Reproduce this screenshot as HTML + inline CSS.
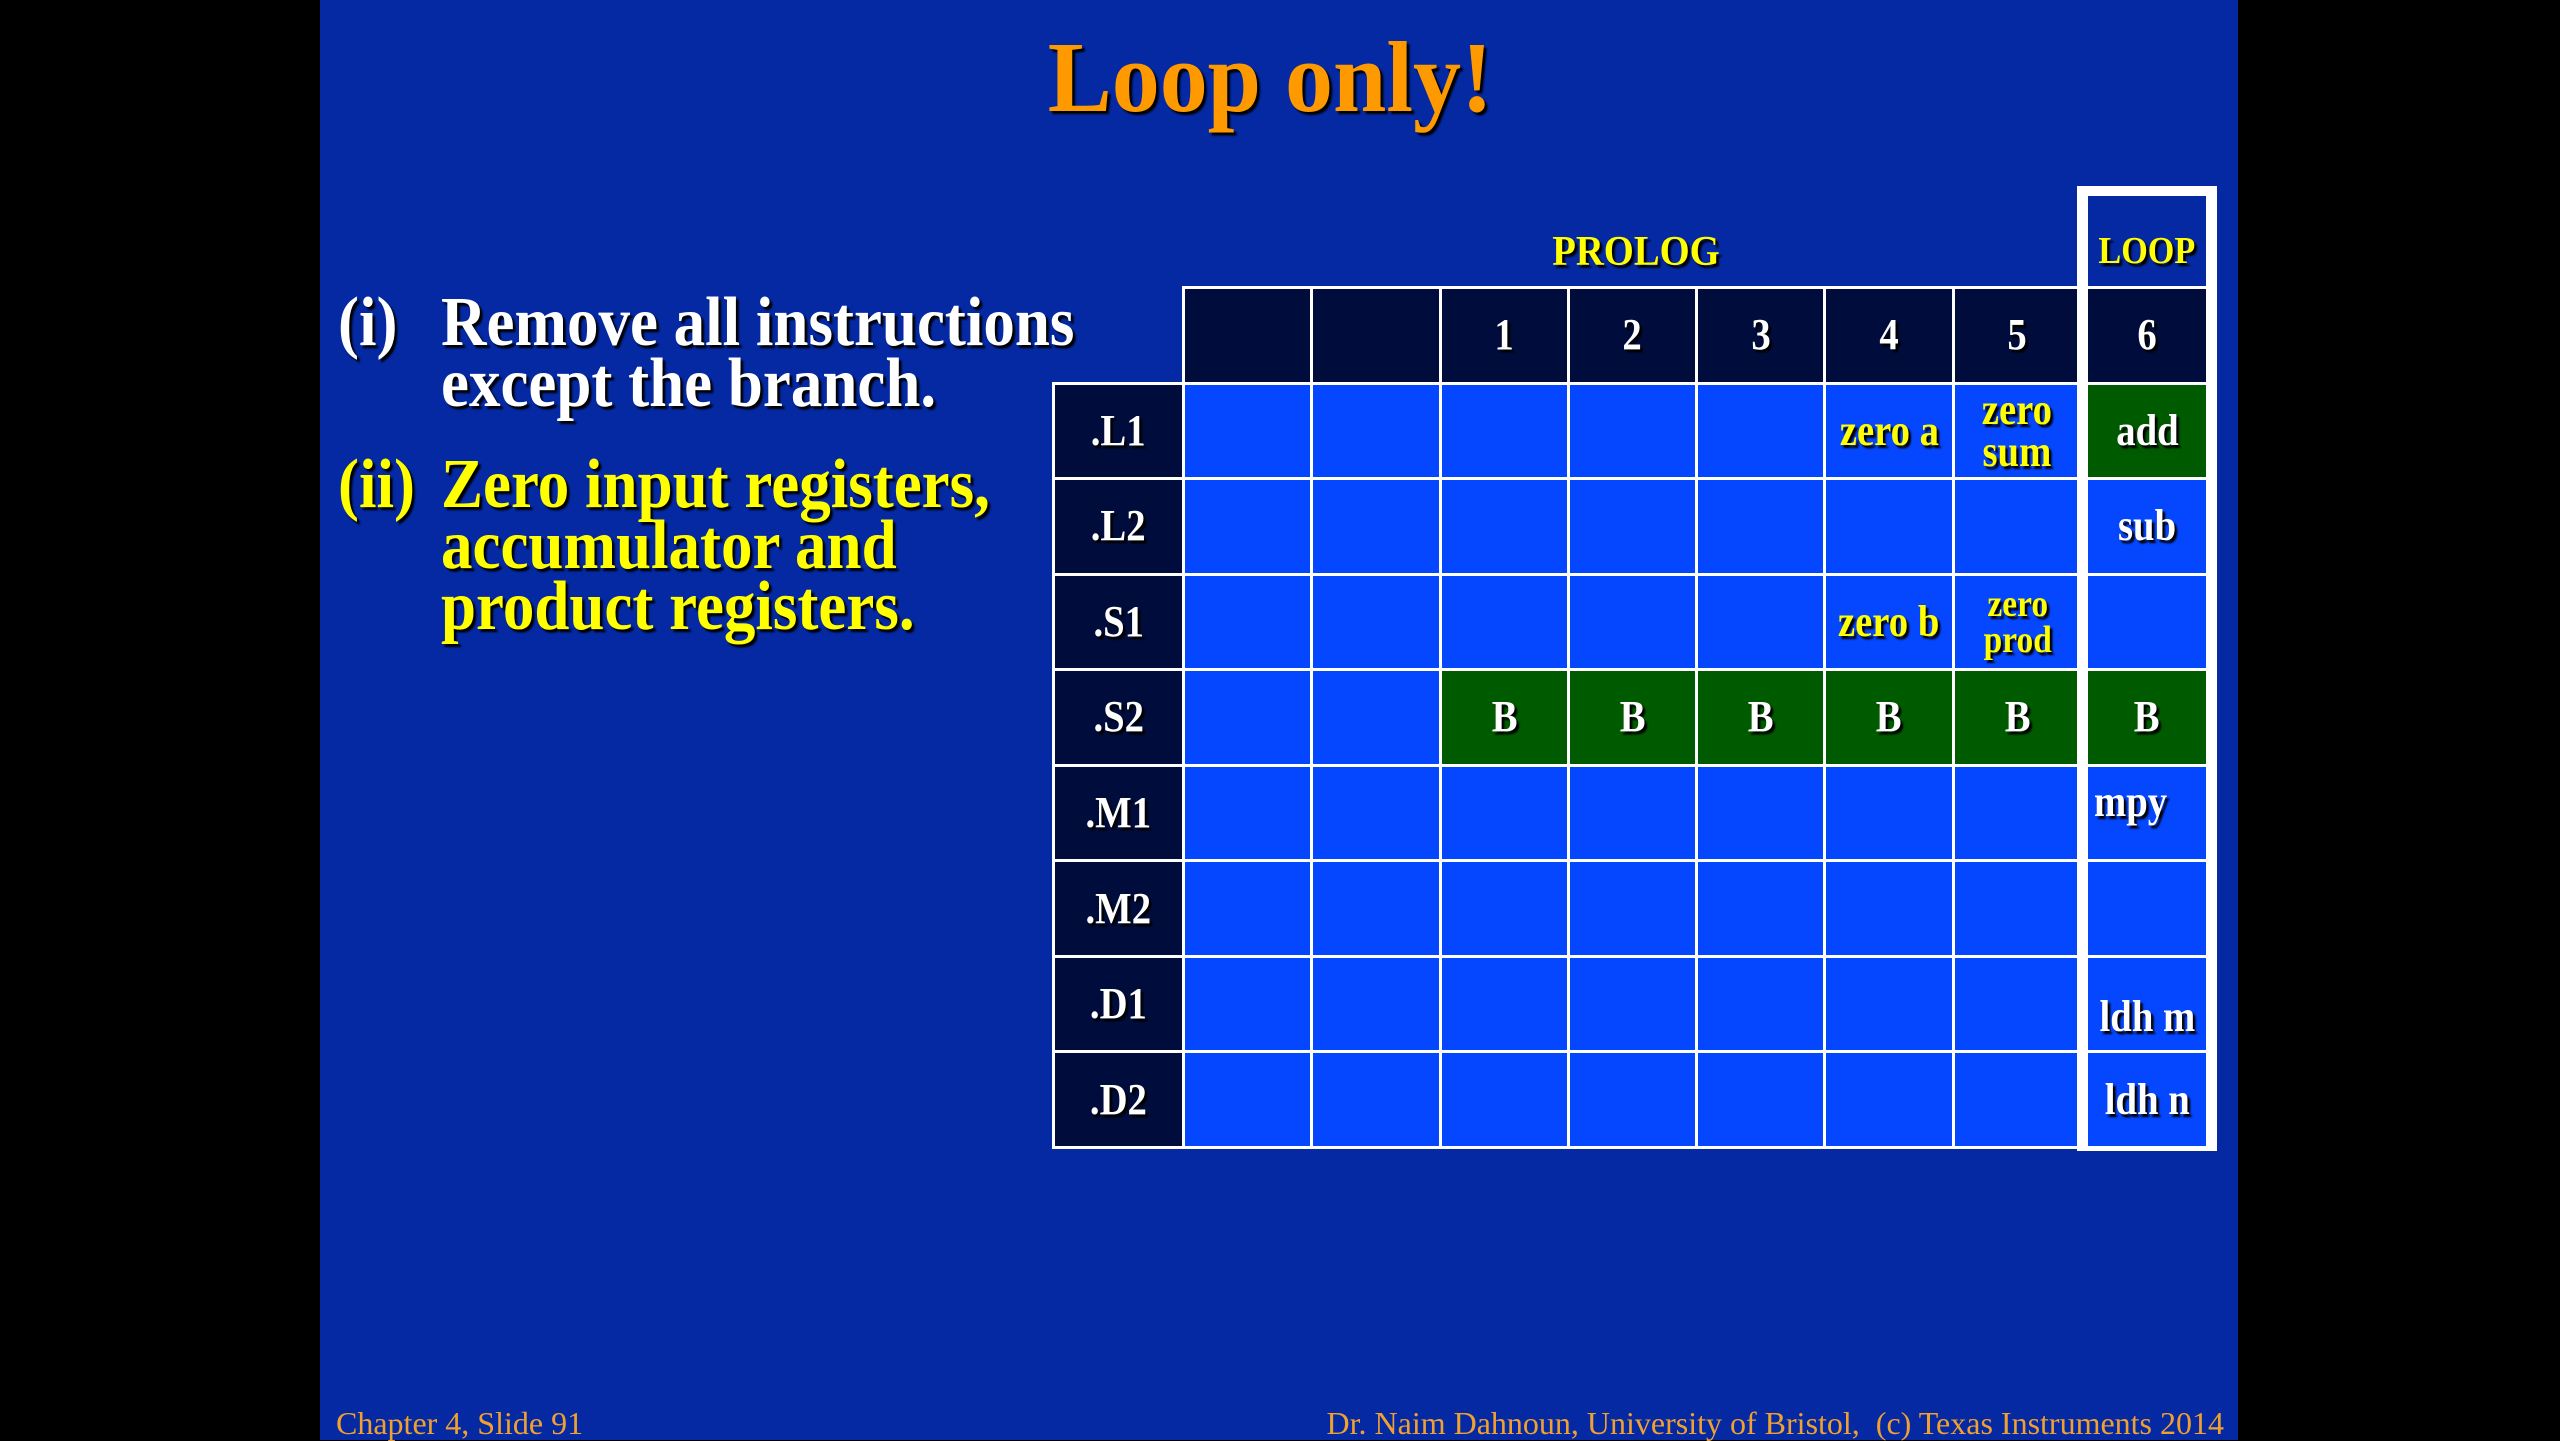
<!DOCTYPE html>
<html><head><meta charset="utf-8"><style>
html,body{margin:0;padding:0;background:#000;}
body{width:2560px;height:1440px;position:relative;overflow:hidden;font-family:"Liberation Serif",serif;font-weight:bold;}
#slide{position:absolute;left:320px;top:0;width:1918px;height:1440px;background:#0429a3;}
.a{position:absolute;white-space:nowrap;z-index:5;}
.sh{text-shadow:3px 3px 2px #000;}
.sx{display:inline-block;transform:scaleX(0.9);transform-origin:left center;}
.grid{position:absolute;display:grid;background:#fff;padding:3px;gap:3px;box-sizing:border-box;z-index:1;}
.grid>div{display:flex;align-items:center;justify-content:center;text-align:center;color:#fff;font-size:44px;line-height:42px;text-shadow:3px 3px 2px #000;}
.grid>div span{display:inline-block;transform:scaleX(0.88);}
.h{background:#000d3c;}
.b{background:#0546ff;}
.g{background:#005a00;}
.y{color:#ffff00 !important;}
</style></head><body>
<div id="slide"></div>

<div class="a sh" style="left:0;width:2560px;text-align:center;top:22px;font-size:101px;line-height:110px;color:#ff9900;"><span style="display:inline-block;transform:scaleX(0.95);margin-left:-20px;">Loop only!</span></div>

<div class="grid" style="left:1052px;top:286px;width:1031px;height:863px;grid-template-columns:127px repeat(7,1fr);grid-template-rows:repeat(9,1fr);">
<div style="background:#0429a3;margin:-3px 0 0 -3px;"></div>
<div class="h"></div><div class="h"></div><div class="h"><span>1</span></div><div class="h"><span>2</span></div><div class="h"><span>3</span></div><div class="h"><span>4</span></div><div class="h"><span>5</span></div>

<div class="h"><span>.L1</span></div><div class="b"></div><div class="b"></div><div class="b"></div><div class="b"></div><div class="b"></div><div class="b y"><span>zero a</span></div><div class="b y"><span>zero<br>sum</span></div>
<div class="h"><span>.L2</span></div><div class="b"></div><div class="b"></div><div class="b"></div><div class="b"></div><div class="b"></div><div class="b"></div><div class="b"></div>
<div class="h"><span>.S1</span></div><div class="b"></div><div class="b"></div><div class="b"></div><div class="b"></div><div class="b"></div><div class="b y"><span>zero b</span></div><div class="b y" style="font-size:38px;line-height:36px;"><span>zero<br>prod</span></div>
<div class="h"><span>.S2</span></div><div class="b"></div><div class="b"></div><div class="g"><span>B</span></div><div class="g"><span>B</span></div><div class="g"><span>B</span></div><div class="g"><span>B</span></div><div class="g"><span>B</span></div>
<div class="h"><span>.M1</span></div><div class="b"></div><div class="b"></div><div class="b"></div><div class="b"></div><div class="b"></div><div class="b"></div><div class="b"></div>
<div class="h"><span>.M2</span></div><div class="b"></div><div class="b"></div><div class="b"></div><div class="b"></div><div class="b"></div><div class="b"></div><div class="b"></div>
<div class="h"><span>.D1</span></div><div class="b"></div><div class="b"></div><div class="b"></div><div class="b"></div><div class="b"></div><div class="b"></div><div class="b"></div>
<div class="h"><span>.D2</span></div><div class="b"></div><div class="b"></div><div class="b"></div><div class="b"></div><div class="b"></div><div class="b"></div><div class="b"></div>
</div>

<div class="a sh" style="left:338px;top:292px;font-size:70px;line-height:61px;color:#fff;"><span class="sx">(i)</span></div>
<div class="a sh" style="left:441px;top:292px;font-size:70px;line-height:61px;color:#fff;"><span class="sx">Remove all instructions</span><br><span class="sx">except the branch.</span></div>
<div class="a sh" style="left:338px;top:454px;font-size:70px;line-height:61px;color:#ffff00;"><span class="sx">(ii)</span></div>
<div class="a sh" style="left:441px;top:454px;font-size:70px;line-height:61px;color:#ffff00;"><span class="sx">Zero input registers,</span><br><span class="sx">accumulator and</span><br><span class="sx">product registers.</span></div>

<div class="a sh" style="left:1436px;width:400px;text-align:center;top:227px;font-size:42px;line-height:50px;color:#ffff00;"><span style="display:inline-block;transform:scaleX(0.92);">PROLOG</span></div>

<div class="a" style="left:2077px;top:186px;width:140px;height:965px;background:#fff;z-index:1;"></div>
<div class="a" style="left:2088px;top:196px;width:118px;height:90px;background:#0429a3;z-index:2;"></div>
<div class="a sh" style="left:2088px;top:226px;width:118px;text-align:center;font-size:38px;line-height:50px;color:#ffff00;"><span style="display:inline-block;transform:scaleX(0.9);">LOOP</span></div>
<div class="grid" style="left:2085px;top:286px;width:124px;height:863px;grid-template-columns:1fr;grid-template-rows:repeat(9,1fr);z-index:3;">
<div class="h"><span>6</span></div>
<div class="g"><span>add</span></div>
<div class="b"><span>sub</span></div>
<div class="b"></div>
<div class="g"><span>B</span></div>
<div class="b" style="align-items:flex-start;justify-content:flex-start;padding:14px 0 0 6px;"><span style="transform-origin:left;">mpy</span></div>
<div class="b"></div>
<div class="b" style="align-items:flex-end;padding-bottom:12px;"><span>ldh&nbsp;m</span></div>
<div class="b"><span>ldh&nbsp;n</span></div>
</div>

<div class="a" style="left:336px;top:1406px;font-size:32px;line-height:34px;font-weight:normal;color:#f0a030;">Chapter 4, Slide 91</div>
<div class="a" style="right:336px;top:1406px;font-size:32px;line-height:34px;font-weight:normal;color:#f0a030;">Dr. Naim Dahnoun, University of Bristol,&nbsp; (c) Texas Instruments 2014</div>
</body></html>
